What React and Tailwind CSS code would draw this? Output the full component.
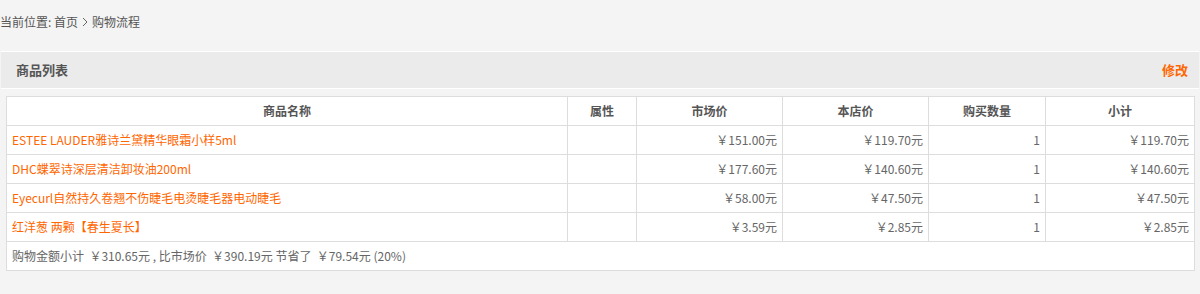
import React from "react";

const rows = [
  { name: "ESTEE LAUDER雅诗兰黛精华眼霜小样5ml", market: "￥151.00元", price: "￥119.70元", qty: "1", sub: "￥119.70元" },
  { name: "DHC蝶翠诗深层清洁卸妆油200ml", market: "￥177.60元", price: "￥140.60元", qty: "1", sub: "￥140.60元" },
  { name: "Eyecurl自然持久卷翘不伤睫毛电烫睫毛器电动睫毛", market: "￥58.00元", price: "￥47.50元", qty: "1", sub: "￥47.50元" },
  { name: "红洋葱 两颗【春生夏长】", market: "￥3.59元", price: "￥2.85元", qty: "1", sub: "￥2.85元" },
];

const font = { fontFamily: '"Noto Sans CJK SC", "Noto Sans", sans-serif' };

export default function App() {
  return (
    <div className="min-h-[294px] bg-[#f4f4f4] text-[12px] text-[#555]" style={font}>
      <div className="h-[44px] flex items-center">
        <span>当前位置: 首页</span>
        <svg width="6" height="10" viewBox="0 0 6 10" className="mx-[4px]">
          <path d="M1 1 L5 5 L1 9" fill="none" stroke="#666" strokeWidth="1" />
        </svg>
        <span>购物流程</span>
      </div>
      <div className="mt-[7px] mx-[1px] border-t border-white">
        <div className="h-[37px] bg-[#ebebeb] border-b border-white flex items-center justify-between pl-[15px] pr-[11px]">
          <span className="text-[13px] font-bold text-[#555]">商品列表</span>
          <span className="text-[13px] font-bold text-[#ff6600]">修改</span>
        </div>
        <div className="pt-[7px] px-[5px]">
          <table className="w-[1188px] table-fixed border-collapse bg-white">
            <colgroup>
              <col className="w-[561px]" />
              <col className="w-[69px]" />
              <col className="w-[146px]" />
              <col className="w-[146px]" />
              <col className="w-[117px]" />
              <col className="w-[149px]" />
            </colgroup>
            <thead>
              <tr className="h-[29px]">
                {["商品名称", "属性", "市场价", "本店价", "购买数量", "小计"].map((h) => (
                  <th key={h} className="border border-[#ddd] p-0 text-center font-bold text-[#555] text-[12px]">
                    {h}
                  </th>
                ))}
              </tr>
            </thead>
            <tbody>
              {rows.map((r) => (
                <tr key={r.name} className="h-[29px] text-[#666]">
                  <td className="border border-[#ddd] pl-[5px] text-[#ff6600] whitespace-nowrap">{r.name}</td>
                  <td className="border border-[#ddd]"></td>
                  <td className="border border-[#ddd] text-right pr-[5px]">{r.market}</td>
                  <td className="border border-[#ddd] text-right pr-[5px]">{r.price}</td>
                  <td className="border border-[#ddd] text-right pr-[5px]">{r.qty}</td>
                  <td className="border border-[#ddd] text-right pr-[5px]">{r.sub}</td>
                </tr>
              ))}
              <tr className="h-[29px]">
                <td colSpan={6} className="border border-[#ddd] pl-[5px] text-[#666] whitespace-pre">
                  {"购物金额小计  ￥310.65元 , 比市场价  ￥390.19元 节省了  ￥79.54元 (20%)"}
                </td>
              </tr>
            </tbody>
          </table>
        </div>
      </div>
    </div>
  );
}
